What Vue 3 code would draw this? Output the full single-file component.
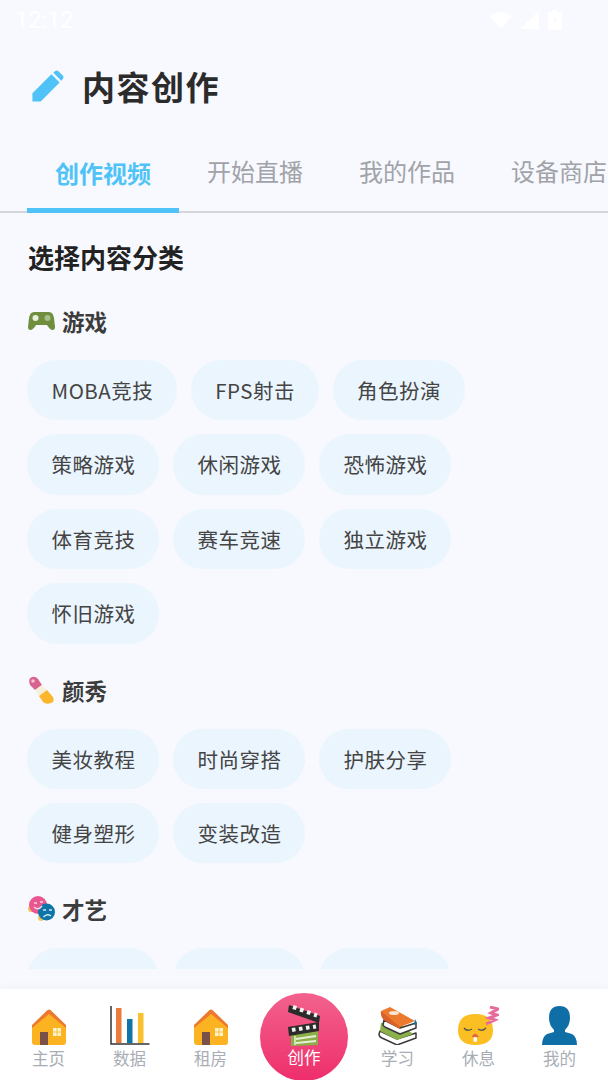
<template>
  <div class="screen">
    <div class="status-bar">
      <span class="time">12:12</span>
      <div class="status-icons">
        <svg width="22" height="18" viewBox="0 0 22 18"><path d="M0 5 Q11 -3 22 5 L11 18 Z" fill="#fff" /></svg>
        <svg class="signal" width="20" height="18" viewBox="0 0 20 18"><path d="M20 0 V18 H1 Z" fill="#fff" /></svg>
        <svg width="14" height="20" viewBox="0 0 14 20"><path d="M4 0 H10 V2 H14 V20 H0 V2 H4 Z" fill="#fff" /><path d="M7 6 L5 11 H7 V15 L9 9 H7 Z" fill="#f7f9ff" /></svg>
      </div>
    </div>

    <div class="page-title">
      <svg class="pen" width="33" height="33" viewBox="0 0 34 34">
        <path d="M1.500 32.500 V24 L21 4.500 L29.500 13 L10 32.500 Z" fill="#4fc3f7" />
        <path d="M23 2.800 L25 1 Q26.500 0 28 1 L33 6 Q34 7.500 33 9 L31.200 11 Z" fill="#4fc3f7" />
      </svg>
      <h1>内容创作</h1>
    </div>

    <div class="tabs">
      <div v-for="(t, i) in tabs" :key="t" class="tab" :class="{ active: i === 0 }">{{ t }}</div>
    </div>

    <div class="content">
      <h2>选择内容分类</h2>
      <section v-for="cat in categories" :key="cat.name" class="category">
        <div class="cat-head">
          <svg v-if="cat.icon === 'game'" width="27" height="20" viewBox="0 0 27 20">
            <path d="M6 1 H21 Q25 1 26 7 L27 16 Q27 19 24.500 19 Q22 19 19 14 H8 Q5 19 2.500 19 Q0 19 0 16 L1 7 Q2 1 6 1 Z" fill="#6f8f3e" />
            <circle cx="7.500" cy="7" r="3" fill="#e8efe0" />
            <circle cx="19.500" cy="7" r="3" fill="#a9bf8c" />
          </svg>
          <svg v-else-if="cat.icon === 'lipstick'" width="27" height="28" viewBox="0 0 27 28">
            <path d="M2 9 Q0 3 3 1.500 Q7 -0.500 10 3 L14 9 L7 14 Z" fill="#d9638f" />
            <circle cx="5" cy="5" r="1.800" fill="#f3c6d8" />
            <path d="M7 14 L14 9 L19 14 L11 20 Z" fill="#f6efdc" />
            <path d="M11 20 L19 14 L25 21 Q27 26 23 27 Q18 29 15 26 Z" fill="#fbb62c" />
          </svg>
          <svg v-else width="27" height="26" viewBox="0 0 27 26">
            <circle cx="3" cy="13" r="3" fill="#f6c65b" />
            <circle cx="13" cy="22" r="3" fill="#f6c65b" />
            <circle cx="10" cy="9" r="9" fill="#e8578f" />
            <circle cx="18.500" cy="16" r="8.500" fill="#0f74a8" />
            <path d="M6 7 h3 M12 6 h3 M6 11 Q10 15 14 10" stroke="#fbd6e4" stroke-width="1.500" fill="none" />
            <path d="M15 14 h3 M21 14 h3 M15.500 21 Q19 17 23 20" stroke="#cfe6f2" stroke-width="1.500" fill="none" />
          </svg>
          <span>{{ cat.name }}</span>
        </div>
        <div class="chips">
          <div v-for="(c, i) in cat.items" :key="i" class="chip" :class="{ blank: !c }">{{ c }}</div>
        </div>
      </section>
    </div>

    <nav class="bottom-nav">
      <div v-for="item in leftNav" :key="item.label" class="nav-item">
        <svg v-if="item.icon === 'house'" width="36" height="36" viewBox="0 0 36 36">
          <path d="M1 18 L18 3 L35 18 V33 Q35 36 32 36 H4 Q1 36 1 33 Z" fill="#fbb321" />
          <path d="M1 16 L16.500 1 Q18 0 19.500 1 L35 16 V19 L18 5 L1 19 Z" fill="#ec7a2e" />
          <rect x="9" y="23" width="8" height="13" fill="#7a5148" />
          <rect x="22" y="19" width="3.600" height="3.600" fill="#fff3d0" />
          <rect x="26.400" y="19" width="3.600" height="3.600" fill="#fff3d0" />
          <rect x="22" y="23.400" width="3.600" height="3.600" fill="#fff3d0" />
          <rect x="26.400" y="23.400" width="3.600" height="3.600" fill="#fff3d0" />
        </svg>
        <svg v-else width="40" height="39" viewBox="0 0 40 39">
          <path d="M1 0 V38 H39.500" stroke="#333" stroke-width="1.500" fill="none" />
          <rect x="6" y="2" width="5.500" height="35" fill="#ec7a3a" />
          <rect x="17" y="13" width="5.500" height="24" fill="#0f74a8" />
          <rect x="28" y="7" width="5.500" height="30" fill="#fbc02d" />
        </svg>
        <span>{{ item.label }}</span>
      </div>
      <div class="nav-center">
        <div class="create-btn">
          <svg width="33" height="42" viewBox="0 0 33 42">
            <path d="M3 31 L30 27 V41 L3 42 Z" fill="#8bb04a" />
            <path d="M8 35 L28 32 M8 39 L28 37" stroke="#e7efd6" stroke-width="2" />
            <path d="M7 32 V41" stroke="#e7efd6" stroke-width="1.500" />
            <path d="M1 1 L32 12 L31 19 L0 8 Z" fill="#2b2b2b" />
            <path d="M0 23 L31 18 V27 L1 32 Z" fill="#2b2b2b" />
            <path d="M5 3 l3.500 1.200 M12 5.500 l3.500 1.200 M19 8 l3.500 1.200 M26 10.500 l3 1" stroke="#f2f2f2" stroke-width="4" />
            <path d="M4 26 l3.500 -.6 M11 25 l3.500 -.6 M18 24 l3.500 -.6 M25 23 l3 -.5" stroke="#f2f2f2" stroke-width="4" />
          </svg>
          <span>创作</span>
        </div>
      </div>
      <div class="nav-item">
        <svg width="40" height="38" viewBox="0 0 40 38">
          <path d="M2 24 L1 27 Q1 30 4 31 L19 38 L38 31 V26 L19 32 Z" fill="#fff" stroke="#3a3a3a" stroke-width="1.500" stroke-linejoin="round" />
          <path d="M3 16 L2 24 L19 33 L35 27 L20 15 Z" fill="#8bb04a" />
          <path d="M6 13 L5 18 Q6 20 9 21 L22 27 L38 21 V16 L22 21 Z" fill="#fff" stroke="#3a3a3a" stroke-width="1.500" stroke-linejoin="round" />
          <path d="M37 12 L39 16 L36 18 Z" fill="#0f74a8" />
          <path d="M3 4 L12 0 L37 14 L22 20 Q8 17 3 4 Z" fill="#ec7a2e" />
          <path d="M3 4 Q2 10 7 14 L22 22 V20 Z" fill="#d9602a" />
          <ellipse cx="16" cy="6" rx="5" ry="2" fill="#fbe3cf" />
        </svg>
        <span>学习</span>
      </div>
      <div class="nav-item">
        <svg width="41" height="39" viewBox="0 0 41 39">
          <path d="M17.500 8 Q35 8 35 24 Q35 39 17.500 39 Q0 39 0 24 Q0 8 17.500 8 Z" fill="#fbbe23" />
          <path d="M6 22 Q9 26 14 23 M20 23 Q24 26 28 22" stroke="#555" stroke-width="1.300" fill="none" />
          <path d="M13.500 31 Q17 24 21 31 Z" fill="#e0664f" />
          <rect x="15.500" y="31" width="3.500" height="5" rx="1.700" fill="#fff" />
          <path d="M32 1 L40 3 L33 7 L39 9 L31 12 L37 14 L28 18" stroke="#e86a9a" stroke-width="3" fill="none" />
        </svg>
        <span>休息</span>
      </div>
      <div class="nav-item">
        <svg width="35" height="39" viewBox="0 0 35 39">
          <path d="M17.500 0 Q28 0 28 12 Q28 19 23 24 V26 L30 28 Q35 31 35 39 H0 Q0 31 5 28 L12 26 V24 Q7 19 7 12 Q7 0 17.500 0 Z" fill="#0f6ea6" />
        </svg>
        <span>我的</span>
      </div>
    </nav>
  </div>
</template>

<script setup>
const tabs = ['创作视频', '开始直播', '我的作品', '设备商店']

const leftNav = [
  { label: '主页', icon: 'house' },
  { label: '数据', icon: 'chart' },
  { label: '租房', icon: 'house' },
]

const categories = [
  {
    name: '游戏',
    icon: 'game',
    items: ['MOBA竞技', 'FPS射击', '角色扮演', '策略游戏', '休闲游戏', '恐怖游戏', '体育竞技', '赛车竞速', '独立游戏', '怀旧游戏'],
  },
  {
    name: '颜秀',
    icon: 'lipstick',
    items: ['美妆教程', '时尚穿搭', '护肤分享', '健身塑形', '变装改造'],
  },
  {
    // labels of this row are scrolled out of view in the screenshot
    name: '才艺',
    icon: 'mask',
    items: ['', '', ''],
  },
]
</script>

<style>
body {
  background: #f7f9ff;
}
</style>

<style scoped>
.screen {
  width: 608px;
  height: 1080px;
  display: flex;
  flex-direction: column;
  overflow: hidden;
  background: #f7f9ff;
  font-family: "Noto Sans CJK SC", "Noto Sans", sans-serif;
}

.status-bar {
  height: 40px;
  flex-shrink: 0;
  display: flex;
  align-items: center;
  justify-content: space-between;
  padding: 0 46px 0 15px;
  color: #fff;
  font-size: 23.500px;
  font-family: Roboto, sans-serif;
}

.status-icons {
  display: flex;
  align-items: center;
  gap: 9px;
}

.signal {
  margin-left: -2px;
}

.page-title {
  height: 92px;
  flex-shrink: 0;
  display: flex;
  align-items: center;
  gap: 18px;
  padding-left: 31px;
}

.pen {
  display: block;
}

h1 {
  margin: 0;
  font-size: 33px;
  font-weight: 700;
  line-height: 1;
  color: #2b2b2b;
  letter-spacing: 1.500px;
}

.tabs {
  height: 81px;
  flex-shrink: 0;
  display: flex;
  padding-left: 27px;
  box-shadow: inset 0 -2px 0 #d4d6dc;
  overflow: hidden;
}

.tab {
  width: 152px;
  flex-shrink: 0;
  text-align: center;
  padding-top: 22px;
  box-sizing: border-box;
  font-size: 24px;
  line-height: 34px;
  color: #a1a3a8;
}

.tab.active {
  color: #4fc3f7;
  font-weight: 700;
  padding-top: 24px;
  border-bottom: 5px solid #4fc3f7;
}

.content {
  flex: 1;
  min-height: 0;
  overflow: hidden;
  padding: 0 27px;
  margin-bottom: 20px;
}

h2 {
  margin: 25px 0 0 1px;
  font-size: 26px;
  line-height: 38px;
  font-weight: 700;
  color: #222;
}

.cat-head {
  display: flex;
  align-items: center;
  gap: 7px;
  height: 36px;
  margin-top: 28px;
  padding-left: 1px;
  font-size: 22.500px;
  font-weight: 700;
  color: #3c3c3c;
}

.category:first-of-type .cat-head {
  margin-top: 27px;
}

.chips {
  display: flex;
  flex-wrap: wrap;
  gap: 14px;
  margin-top: 21px;
}

.chip {
  height: 60.400px;
  line-height: 60.400px;
  padding: 0 23.500px 0 24.500px;
  border-radius: 31px;
  background: #ebf5fe;
  font-size: 20.500px;
  letter-spacing: 0.500px;
  color: #444;
  white-space: nowrap;
}

.chip.blank {
  width: 84px;
}

.bottom-nav {
  height: 91px;
  flex-shrink: 0;
  display: flex;
  padding: 0 8px;
  background: #fff;
  box-shadow: 0 -2px 10px rgba(0, 0, 0, 0.03);
}

.nav-item {
  width: 81px;
  display: flex;
  flex-direction: column;
  align-items: center;
  justify-content: flex-end;
  padding-bottom: 12px;
  box-sizing: border-box;
  gap: 3px;
}

.nav-item span {
  font-size: 16.500px;
  line-height: 20px;
  color: #a8adb5;
}

.nav-center {
  width: 106px;
  display: flex;
  justify-content: center;
  padding-top: 4px;
}

.create-btn {
  width: 88px;
  height: 88px;
  border-radius: 50%;
  background: linear-gradient(180deg, #f2628c, #ee2e6c);
  display: flex;
  flex-direction: column;
  align-items: center;
  padding-top: 11px;
  box-sizing: border-box;
}

.create-btn svg {
  display: block;
  flex-shrink: 0;
}

.create-btn span {
  margin-top: 1px;
  font-size: 16.500px;
  line-height: 20px;
  color: #fff;
}
</style>
